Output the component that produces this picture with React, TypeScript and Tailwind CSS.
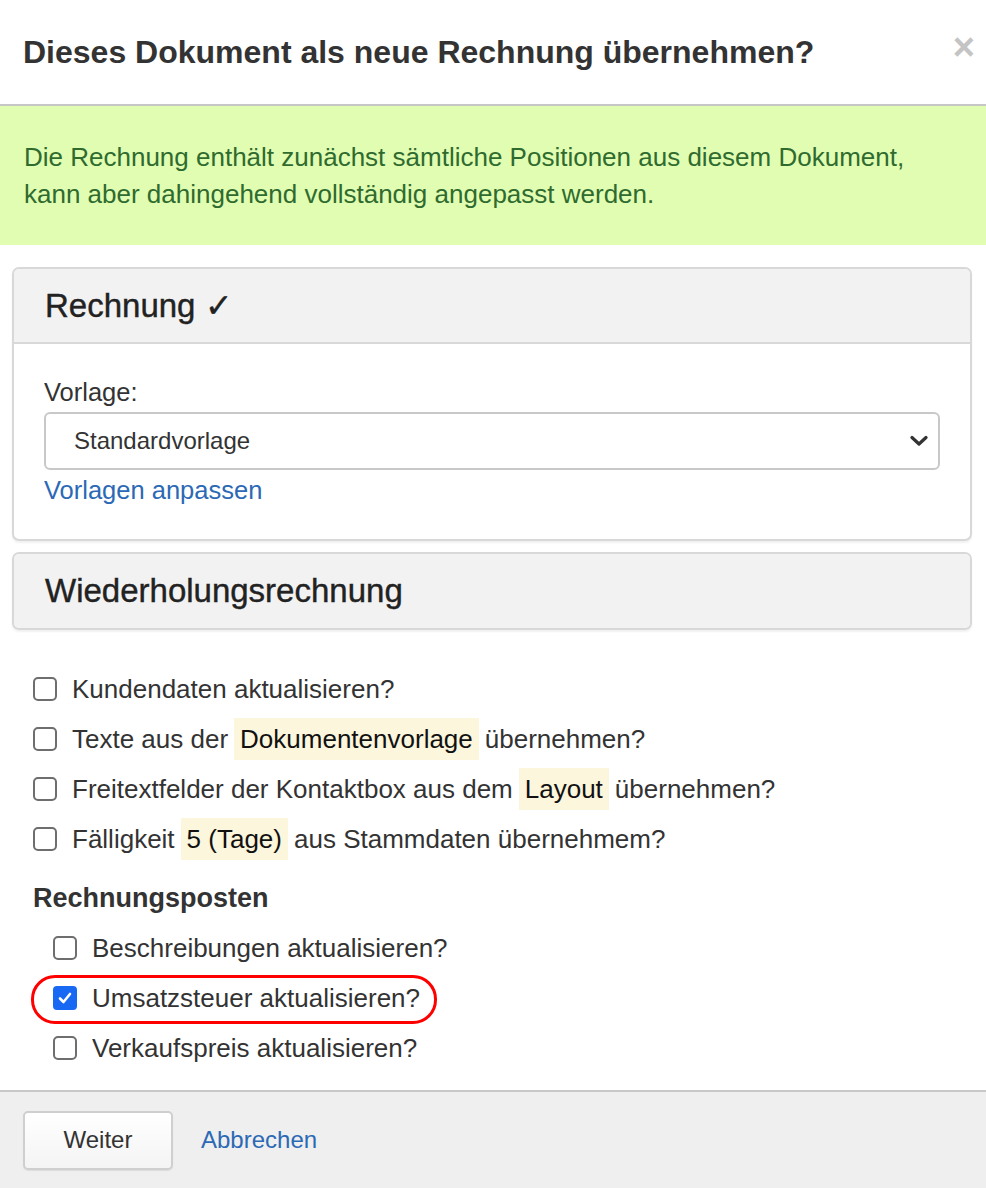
import React from "react";

const font = { fontFamily: '"Liberation Sans", Arial, Helvetica, sans-serif' };

function Box({ checked = false }: { checked?: boolean }) {
  if (checked) {
    return (
      <span className="flex h-[24px] w-[24px] shrink-0 items-center justify-center rounded-[4px] bg-[#1768f2]">
        <svg width="16" height="16" viewBox="0 0 16 16" fill="none">
          <path d="M3 8.5 L6.5 12 L13 4" stroke="#fff" strokeWidth="2.6" strokeLinecap="round" strokeLinejoin="round" />
        </svg>
      </span>
    );
  }
  return <span className="h-[24px] w-[24px] shrink-0 rounded-[5px] border-2 border-[#6e6e6e] bg-white" />;
}

function Mark({ children }: { children: React.ReactNode }) {
  return <span className="mx-[6px] inline-flex h-[42px] items-center bg-[#fbf6dc] px-[6px] text-[#111]">{children}</span>;
}

function Row({ children, checked = false }: { children: React.ReactNode; checked?: boolean }) {
  return (
    <div className="flex h-[50px] items-center gap-[15px] text-[26px] text-[#333]">
      <Box checked={checked} />
      <span className="flex items-center whitespace-nowrap">{children}</span>
    </div>
  );
}

export default function App() {
  return (
    <div className="flex h-[1188px] w-[986px] flex-col bg-white" style={font}>
      {/* header */}
      <div className="flex h-[106px] shrink-0 items-center justify-between border-b-2 border-[#c6c6c6] pl-[23px] pr-[11px]">
        <h1 className="text-[32px] font-bold text-[#333]">Dieses Dokument als neue Rechnung übernehmen?</h1>
        <span className="mb-[10px] text-[38px] font-bold leading-none text-[#c4c4c4]">×</span>
      </div>

      {/* info */}
      <div className="bg-[#e1fdb1] px-[24px] pb-[32px] pt-[33px] text-[26px] leading-[37px] text-[#2f6b2f]">
        Die Rechnung enthält zunächst sämtliche Positionen aus diesem Dokument,
        <br />
        kann aber dahingehend vollständig angepasst werden.
      </div>

      <div className="ml-[12px] mr-[14px] mt-[22px] flex flex-col gap-[11px]">
        {/* template panel */}
        <div className="overflow-hidden rounded-[7px] border-2 border-[#d8d8d8] shadow-[0_2px_2px_rgba(0,0,0,0.06)]">
          <div className="flex h-[75px] items-center border-b-2 border-[#d8d8d8] bg-[#f2f2f2] px-[31px] text-[33px] text-[#222] [-webkit-text-stroke:0.4px_#222]">
            Rechnung ✓
          </div>
          <div className="px-[30px] pb-[33px] pt-[33px]">
            <div className="text-[25.5px] leading-[30px] text-[#333]">Vorlage:</div>
            <div className="mt-[5px] flex h-[58px] items-center justify-between rounded-[6px] border-2 border-[#c8c8c8] pl-[28px] pr-[10px] text-[24px] text-[#333]">
              <span>Standardvorlage</span>
              <svg width="18" height="12" viewBox="0 0 18 12" fill="none">
                <path d="M2 2.5 L9 9 L16 2.5" stroke="#333" strokeWidth="3.2" strokeLinecap="round" strokeLinejoin="round" />
              </svg>
            </div>
            <div className="mt-[4px] text-[25.5px] leading-[32px] text-[#2c69b5]">Vorlagen anpassen</div>
          </div>
        </div>

        {/* recurring panel */}
        <div className="overflow-hidden rounded-[7px] border-2 border-[#d8d8d8] shadow-[0_2px_2px_rgba(0,0,0,0.06)]">
          <div className="flex h-[74px] items-center bg-[#f2f2f2] px-[31px] text-[33px] text-[#222] [-webkit-text-stroke:0.4px_#222]">
            Wiederholungsrechnung
          </div>
        </div>
      </div>

      {/* options */}
      <div className="flex-1 px-[33px] pt-[34px]">
        <Row>Kundendaten aktualisieren?</Row>
        <Row>
          Texte aus der<Mark>Dokumentenvorlage</Mark>übernehmen?
        </Row>
        <Row>
          Freitextfelder der Kontaktbox aus dem<Mark>Layout</Mark>übernehmen?
        </Row>
        <Row>
          Fälligkeit<Mark>5 (Tage)</Mark>aus Stammdaten übernehmem?
        </Row>

        <div className="mt-[18px] text-[27px] font-semibold leading-[32px] text-[#333]">Rechnungsposten</div>

        <div className="mt-[9px] pl-[20px]">
          <Row>Beschreibungen aktualisieren?</Row>
          <div className="relative">
            <span className="pointer-events-none absolute left-[-22px] top-[2px] h-[49px] w-[406px] rounded-[24px] border-[3px] border-[#f00]" />
            <Row checked>Umsatzsteuer aktualisieren?</Row>
          </div>
          <Row>Verkaufspreis aktualisieren?</Row>
        </div>
      </div>

      {/* footer */}
      <div className="flex h-[98px] shrink-0 items-center gap-[28px] border-t-2 border-[#c8c8c8] bg-[#efefef] pl-[23px]">
        <button className="h-[59px] w-[150px] rounded-[5px] border-2 border-[#cfcfcf] bg-gradient-to-b from-white to-[#f4f4f4] text-[24px] text-[#333] shadow-[0_1px_1px_rgba(0,0,0,0.08)]">
          Weiter
        </button>
        <span className="text-[24px] text-[#2c69b5]">Abbrechen</span>
      </div>
    </div>
  );
}
